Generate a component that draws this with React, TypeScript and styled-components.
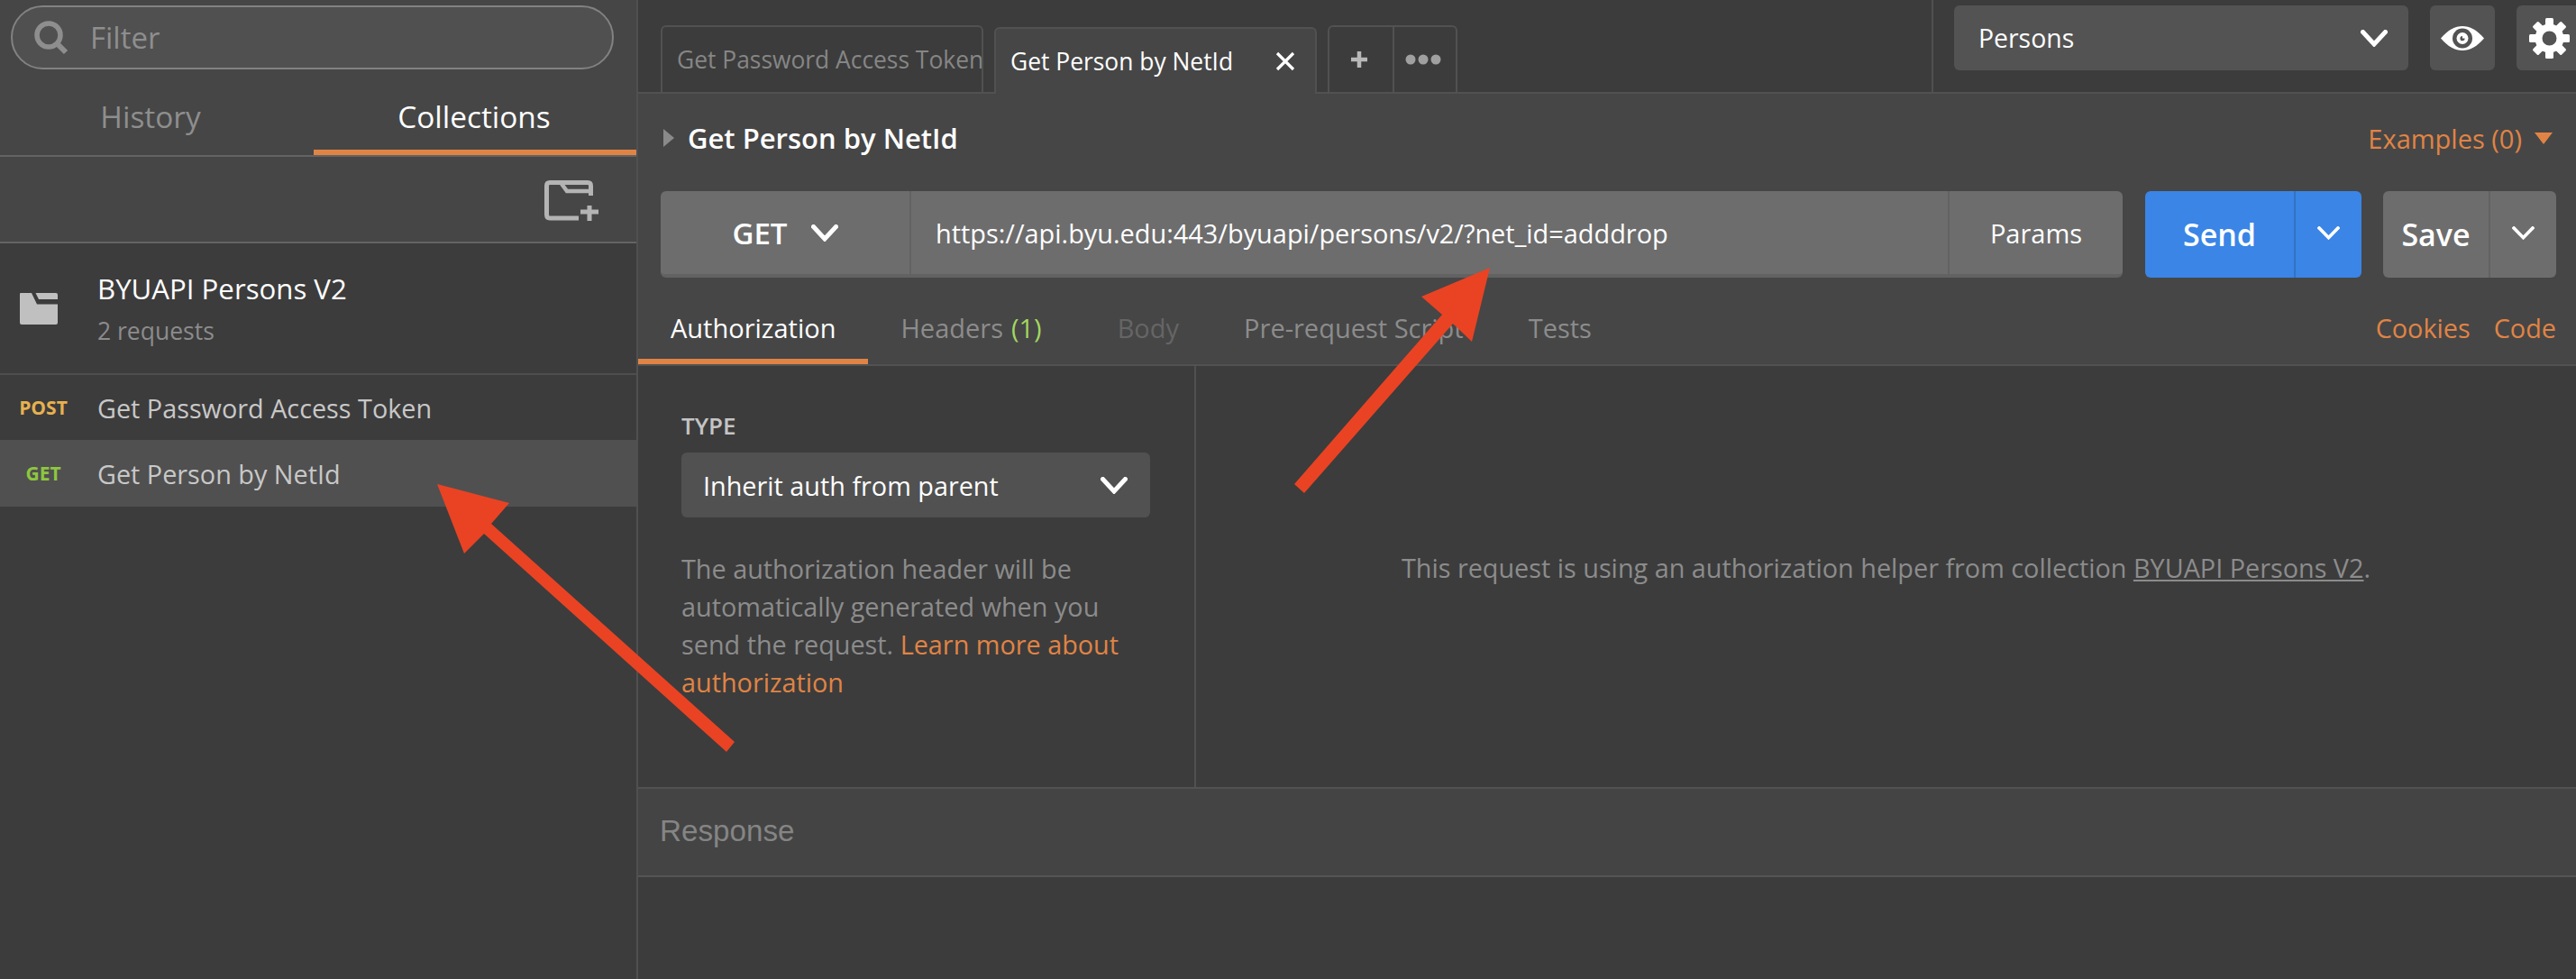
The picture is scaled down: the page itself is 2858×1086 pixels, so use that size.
import React from 'react';
import styled, { createGlobalStyle } from 'styled-components';

const Global = createGlobalStyle`
  html, body { margin: 0; padding: 0; background: #3c3c3c; }
  * { box-sizing: border-box; }
`;

const Page = styled.div`
  position: relative;
  width: 2858px;
  height: 1086px;
  overflow: hidden;
  display: flex;
  background: #3c3c3c;
  font-family: "Open Sans", sans-serif;
  color: #fff;
`;

const Sidebar = styled.aside`
  width: 708px;
  flex-shrink: 0;
  border-right: 2px solid #505050;
  display: flex;
  flex-direction: column;
`;

const SidebarHead = styled.div`
  background: #464646;
  height: 270px;
  border-bottom: 2px solid #636363;
  display: flex;
  flex-direction: column;
`;

const FilterWrap = styled.div`
  padding: 6px 25px 0 12px;
  height: 88px;
`;

const FilterBox = styled.div`
  height: 71px;
  border: 2px solid #828282;
  border-radius: 36px;
  background: #505050;
  display: flex;
  align-items: center;
  padding-left: 24px;
  gap: 24px;
`;

const FilterText = styled.span`
  font-size: 33px;
  color: #8e8e8e;
`;

const SideTabs = styled.div`
  height: 86px;
  display: flex;
  border-bottom: 2px solid #636363;
`;

const SideTab = styled.div<{ $active?: boolean; $w: number; $shift: number }>`
  width: ${p => p.$w}px;
  display: flex;
  align-items: center;
  justify-content: center;
  font-size: 33.4px;
  padding: 4px ${p => p.$shift}px 0 0;
  color: ${p => (p.$active ? '#fff' : '#8e8e8e')};
  border-bottom: 6px solid ${p => (p.$active ? '#e08445' : 'transparent')};
`;

const SideTools = styled.div`
  flex: 1;
  display: flex;
  align-items: center;
  justify-content: flex-end;
  padding: 3px 42px 0 0;
`;

const CollectionRow = styled.div`
  height: 146px;
  display: flex;
  align-items: center;
  border-bottom: 2px solid #4e4e4e;
`;

const FolderCell = styled.div`
  width: 108px;
  flex-shrink: 0;
  padding-left: 22px;
  display: flex;
  align-items: center;
`;

const CollectionMeta = styled.div`
  display: flex;
  flex-direction: column;
  gap: 12px;
`;

const CollectionName = styled.div`
  font-size: 31.2px;
  line-height: 38px;
  color: #fff;
`;

const CollectionCount = styled.div`
  font-size: 26.5px;
  line-height: 32px;
  color: #8c8c8c;
`;

const RequestRow = styled.div<{ $selected?: boolean; $h: number }>`
  height: ${p => p.$h}px;
  display: flex;
  align-items: center;
  background: ${p => (p.$selected ? '#505050' : 'transparent')};
`;

const Method = styled.span<{ $color: string }>`
  width: 108px;
  padding-right: 12px;
  text-align: center;
  flex-shrink: 0;
  font-size: 21px;
  font-weight: 700;
  color: ${p => p.$color};
`;

const RequestName = styled.span`
  font-size: 28.8px;
  color: #c8c8c8;
`;

const Main = styled.main`
  flex: 1;
  min-width: 0;
  display: flex;
  flex-direction: column;
`;

const TabStrip = styled.div`
  height: 104px;
  flex-shrink: 0;
  display: flex;
  align-items: flex-end;
  padding-left: 25px;
  gap: 12px;
  border-bottom: 2px solid #525252;
  background: #3c3c3c;
`;

const DocTab = styled.div<{ $active?: boolean }>`
  width: 358px;
  height: 74px;
  margin-bottom: ${p => (p.$active ? '-2px' : '0')};
  padding: 0 0 0 16px;
  border: 2px solid #515151;
  border-bottom: ${p => (p.$active ? 'none' : '0')};
  border-radius: 6px 6px 0 0;
  background: ${p => (p.$active ? '#464646' : 'transparent')};
  display: flex;
  align-items: center;
  overflow: hidden;
  white-space: nowrap;
  font-size: 26.4px;
  color: ${p => (p.$active ? '#fff' : '#868686')};
`;

const TabClose = styled.span`
  margin-left: auto;
  margin-right: 22px;
  display: flex;
`;

const TabActions = styled.div`
  height: 74px;
  display: flex;
  border: 2px solid #515151;
  border-bottom: 0;
  border-radius: 6px 6px 0 0;
`;

const TabAction = styled.div<{ $w: number; $split?: boolean }>`
  width: ${p => p.$w}px;
  display: flex;
  align-items: center;
  justify-content: center;
  padding-right: 4px;
  border-left: ${p => (p.$split ? '2px solid #515151' : '0')};
`;

const EnvArea = styled.div`
  margin-left: auto;
  width: 715px;
  height: 102px;
  flex-shrink: 0;
  border-left: 2px solid #505050;
  padding: 6px 0 0 23px;
  display: flex;
  align-items: flex-start;
  gap: 24px;
  overflow: hidden;
`;

const EnvSelect = styled.div`
  width: 504px;
  flex-shrink: 0;
  height: 72px;
  background: #535353;
  border-radius: 6px;
  display: flex;
  align-items: center;
  justify-content: space-between;
  padding: 0 23px 0 27px;
  font-size: 28.4px;
`;

const IconBtn = styled.div`
  width: 72px;
  height: 72px;
  flex-shrink: 0;
  background: #535353;
  border-radius: 6px;
  display: flex;
  align-items: center;
  justify-content: center;
`;

const Builder = styled.section`
  background: #464646;
  height: 302px;
  flex-shrink: 0;
  border-bottom: 2px solid #525252;
  display: flex;
  flex-direction: column;
`;

const NameRow = styled.div`
  height: 98px;
  padding: 0 26px 0 28px;
  display: flex;
  align-items: center;
`;

const RequestTitle = styled.span`
  margin-left: 15px;
  font-size: 31px;
  font-weight: 600;
`;

const Examples = styled.span`
  margin-left: auto;
  display: flex;
  align-items: center;
  gap: 14px;
  font-size: 29px;
  color: #e08445;
`;

const UrlRow = styled.div`
  margin-top: 10px;
  height: 96px;
  flex-shrink: 0;
  padding: 0 22px 0 25px;
  display: flex;
`;

const UrlBar = styled.div`
  width: 1622px;
  flex-shrink: 0;
  background: #6d6d6d;
  border-radius: 6px;
  border-bottom: 4px solid #626262;
  display: flex;
  overflow: hidden;
`;

const UrlMethod = styled.div`
  width: 278px;
  display: flex;
  align-items: center;
  justify-content: center;
  gap: 26px;
  font-size: 33px;
  font-weight: 600;
  border-right: 2px solid #626262;
`;

const UrlText = styled.div`
  flex: 1;
  display: flex;
  align-items: center;
  padding-left: 27px;
  font-size: 28.9px;
`;

const ParamsBtn = styled.div`
  width: 194px;
  display: flex;
  align-items: center;
  justify-content: center;
  font-size: 29px;
  border-left: 2px solid #626262;
`;

const SplitBtn = styled.div<{ $bg: string; $line: string; $main: number; $total: number; $gap: number }>`
  width: ${p => p.$total}px;
  margin-left: ${p => p.$gap}px;
  flex-shrink: 0;
  background: ${p => p.$bg};
  border-radius: 6px;
  display: flex;
  font-size: 34px;
  font-weight: 600;
  & > span:first-child {
    width: ${p => p.$main}px;
    display: flex;
    align-items: center;
    justify-content: center;
    border-right: 2px solid ${p => p.$line};
  }
  & > span:last-child {
    flex: 1;
    display: flex;
    align-items: center;
    justify-content: center;
    padding-bottom: 4px;
  }
`;

const ReqTabs = styled.div`
  margin-top: 18px;
  height: 78px;
  display: flex;
  align-items: stretch;
  padding-right: 22px;
`;

const ReqTab = styled.div<{ $active?: boolean; $dim?: boolean }>`
  padding: 2px 36px 0;
  display: flex;
  align-items: center;
  font-size: 29px;
  color: ${p => (p.$active ? '#fff' : p.$dim ? '#656565' : '#8c8c8c')};
  border-bottom: 6px solid ${p => (p.$active ? '#e08445' : 'transparent')};
`;

const Count = styled.span`
  color: #a3d760;
  margin: 0 12px 0 9px;
`;

const Links = styled.div`
  margin-left: auto;
  display: flex;
  align-items: center;
  gap: 26px;
  font-size: 28.8px;
  padding-bottom: 4px;
  color: #e08445;
`;

const AuthPanel = styled.section`
  height: 469px;
  flex-shrink: 0;
  border-bottom: 2px solid #525252;
  display: flex;
`;

const AuthLeft = styled.div`
  width: 619px;
  flex-shrink: 0;
  border-right: 2px solid #505050;
  padding: 51px 49px 0 48px;
`;

const TypeLabel = styled.div`
  font-size: 26px;
  line-height: 30px;
  font-weight: 600;
  color: #c4c4c4;
`;

const TypeSelect = styled.div`
  margin-top: 15px;
  height: 72px;
  background: #515151;
  border-radius: 6px;
  display: flex;
  align-items: center;
  justify-content: space-between;
  padding: 0 25px 0 24px;
  font-size: 28.8px;
`;

const Help = styled.p`
  margin: 36px 0 0;
  font-size: 28.8px;
  line-height: 42px;
  color: #8c8c8c;
`;

const Link = styled.span`
  color: #e08445;
`;

const AuthRight = styled.div`
  flex: 1;
  display: flex;
  align-items: center;
  justify-content: center;
  padding-bottom: 20px;
  font-size: 28.8px;
  color: #8c8c8c;
`;

const Underlined = styled.span`
  text-decoration: underline;
`;

const ResponseBar = styled.section`
  height: 98px;
  flex-shrink: 0;
  background: #444;
  border-bottom: 2px solid #555;
  padding: 0 0 2px 24px;
  display: flex;
  align-items: center;
  font-family: "Liberation Sans", Arial, sans-serif;
  font-size: 33.2px;
  color: #858585;
`;

const Overlay = styled.svg`
  position: absolute;
  left: 0;
  top: 0;
  pointer-events: none;
`;

const Chevron = ({ w = 30, h = 19, sw = 5 }: { w?: number; h?: number; sw?: number }) => (
  <svg width={w} height={h} viewBox="0 0 30 19" fill="none" preserveAspectRatio="none">
    <path d="M2.5 2.5 L15 16 L27.5 2.5" stroke="#fff" strokeWidth={sw} strokeLinecap="square" strokeLinejoin="miter" />
  </svg>
);

const SearchIcon = () => (
  <svg width="38" height="38" viewBox="0 0 38 38" fill="none">
    <circle cx="16" cy="16" r="13" stroke="#8e8e8e" strokeWidth="5.5" />
    <path d="M25 25 L35 35" stroke="#8e8e8e" strokeWidth="6" />
  </svg>
);

const NewFolderIcon = () => (
  <svg width="60" height="45" viewBox="0 0 60 45" fill="none">
    <path d="M51.5 17 V6 Q51.5 2.5 48 2.5 H6 Q2.5 2.5 2.5 6 V38 Q2.5 42 6 42 H38" stroke="#b4b4b4" strokeWidth="5" />
    <path d="M18 2.5 L25 12 H50" stroke="#b4b4b4" strokeWidth="4.5" />
    <path d="M50 28 V45 M40 35 H60" stroke="#b4b4b4" strokeWidth="5" />
  </svg>
);

const FolderIcon = () => (
  <svg width="42" height="35" viewBox="0 0 42 35" fill="#c0c0c0">
    <path d="M1 0 H13 L19 12.5 H42 V33 Q42 35 40 35 H2 Q0 35 0 33 V1 Q0 0 1 0 Z" />
    <path d="M17.5 0 H40 Q42 0 42 2 V7 H21 Z" />
  </svg>
);

const CloseIcon = () => (
  <svg width="22" height="22" viewBox="0 0 22 22">
    <path d="M2 2 L20 20 M20 2 L2 20" stroke="#fff" strokeWidth="3.2" />
  </svg>
);

const PlusIcon = () => (
  <svg width="22" height="20" viewBox="0 0 22 20">
    <path d="M11 1 V19 M2 10 H20" stroke="#b8b8b8" strokeWidth="4.5" />
  </svg>
);

const DotsIcon = () => (
  <svg width="40" height="12" viewBox="0 0 40 12" fill="#a0a0a0">
    <circle cx="6" cy="6" r="5.5" />
    <circle cx="20" cy="6" r="5.5" />
    <circle cx="34" cy="6" r="5.5" />
  </svg>
);

const EyeIcon = () => (
  <svg width="48" height="27" viewBox="0 0 48 27">
    <path d="M0 13.5 C8 4 16 0 24 0 C32 0 40 4 48 13.5 C40 23 32 27 24 27 C16 27 8 23 0 13.5 Z" fill="#fff" />
    <circle cx="24" cy="13.5" r="11" fill="#535353" />
    <circle cx="24" cy="13.5" r="6.5" fill="#fff" />
    <path d="M24 11 A2.6 2.6 0 1 0 26.6 13.5 H24 Z" fill="#535353" />
  </svg>
);

const GearIcon = () => {
  const teeth = Array.from({ length: 8 }, (_, i) => i * 45);
  return (
    <svg width="45" height="45" viewBox="0 0 45 45">
      {teeth.map(a => (
        <rect key={a} x="18" y="0" width="9" height="12" rx="1.5" fill="#fff" transform={`rotate(${a} 22.5 22.5)`} />
      ))}
      <circle cx="22.5" cy="22.5" r="12" fill="none" stroke="#fff" strokeWidth="8" />
    </svg>
  );
};

const Caret = ({ color, dir }: { color: string; dir: 'right' | 'down' }) =>
  dir === 'right' ? (
    <svg width="12" height="20" viewBox="0 0 12 20">
      <path d="M0 0 L12 10 L0 20 Z" fill={color} />
    </svg>
  ) : (
    <svg width="20" height="13" viewBox="0 0 20 13">
      <path d="M0 0 H20 L10 13 Z" fill={color} />
    </svg>
  );

export default function App() {
  return (
    <>
      <Global />
      <Page>
        <Sidebar>
          <SidebarHead>
            <FilterWrap>
              <FilterBox>
                <SearchIcon />
                <FilterText>Filter</FilterText>
              </FilterBox>
            </FilterWrap>
            <SideTabs>
              <SideTab $w={348} $shift={14}>History</SideTab>
              <SideTab $w={358} $shift={2} $active>Collections</SideTab>
            </SideTabs>
            <SideTools>
              <NewFolderIcon />
            </SideTools>
          </SidebarHead>
          <CollectionRow>
            <FolderCell>
              <FolderIcon />
            </FolderCell>
            <CollectionMeta>
              <CollectionName>BYUAPI Persons V2</CollectionName>
              <CollectionCount>2 requests</CollectionCount>
            </CollectionMeta>
          </CollectionRow>
          <RequestRow $h={72}>
            <Method $color="#e7b14f">POST</Method>
            <RequestName>Get Password Access Token</RequestName>
          </RequestRow>
          <RequestRow $h={74} $selected>
            <Method $color="#8dc63f">GET</Method>
            <RequestName>Get Person by NetId</RequestName>
          </RequestRow>
        </Sidebar>
        <Main>
          <TabStrip>
            <DocTab>Get Password Access Token</DocTab>
            <DocTab $active>
              Get Person by NetId
              <TabClose>
                <CloseIcon />
              </TabClose>
            </DocTab>
            <TabActions>
              <TabAction $w={70}>
                <PlusIcon />
              </TabAction>
              <TabAction $w={70} $split>
                <DotsIcon />
              </TabAction>
            </TabActions>
            <EnvArea>
              <EnvSelect>
                Persons
                <Chevron />
              </EnvSelect>
              <IconBtn>
                <EyeIcon />
              </IconBtn>
              <IconBtn>
                <GearIcon />
              </IconBtn>
            </EnvArea>
          </TabStrip>
          <Builder>
            <NameRow>
              <Caret color="#8a8a8a" dir="right" />
              <RequestTitle>Get Person by NetId</RequestTitle>
              <Examples>
                Examples (0)
                <Caret color="#e08445" dir="down" />
              </Examples>
            </NameRow>
            <UrlRow>
              <UrlBar>
                <UrlMethod>
                  GET
                  <Chevron />
                </UrlMethod>
                <UrlText>https://api.byu.edu:443/byuapi/persons/v2/?net_id=adddrop</UrlText>
                <ParamsBtn>Params</ParamsBtn>
              </UrlBar>
              <SplitBtn $bg="#3a85e6" $line="#3372c5" $main={167} $total={240} $gap={25}>
                <span>Send</span>
                <span>
                  <Chevron w={25} h={15} sw={4.5} />
                </span>
              </SplitBtn>
              <SplitBtn $bg="#6d6d6d" $line="#626262" $main={119} $total={192} $gap={24}>
                <span>Save</span>
                <span>
                  <Chevron w={25} h={15} sw={4.5} />
                </span>
              </SplitBtn>
            </UrlRow>
            <ReqTabs>
              <ReqTab $active>Authorization</ReqTab>
              <ReqTab>
                Headers<Count>(1)</Count>
              </ReqTab>
              <ReqTab $dim>Body</ReqTab>
              <ReqTab>Pre-request Script</ReqTab>
              <ReqTab>Tests</ReqTab>
              <Links>
                <span>Cookies</span>
                <span>Code</span>
              </Links>
            </ReqTabs>
          </Builder>
          <AuthPanel>
            <AuthLeft>
              <TypeLabel>TYPE</TypeLabel>
              <TypeSelect>
                Inherit auth from parent
                <Chevron />
              </TypeSelect>
              <Help>
                The authorization header will be automatically generated when you send the request.{' '}
                <Link>Learn more about authorization</Link>
              </Help>
            </AuthLeft>
            <AuthRight>
              <span>
                This request is using an authorization helper from collection{' '}
                <Underlined>BYUAPI Persons V2</Underlined>.
              </span>
            </AuthRight>
          </AuthPanel>
          <ResponseBar>Response</ResponseBar>
        </Main>
        <Overlay width="2858" height="1086" viewBox="0 0 2858 1086">
          <polygon points="485,537 565,558 545,581 815,823 806,834 537,592 515,614" fill="#e94324" />
          <polygon points="1653,297 1633,379 1612,359 1447,547 1436,537 1600,349 1577,329" fill="#e94324" />
        </Overlay>
      </Page>
    </>
  );
}
